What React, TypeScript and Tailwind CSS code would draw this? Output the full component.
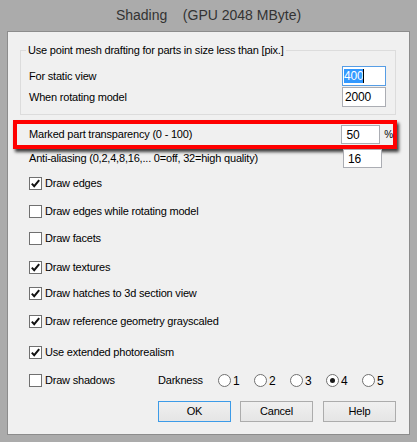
import React from 'react';

const font = { fontFamily: '"Liberation Sans", Arial, sans-serif' };

function CheckBox({ checked }: { checked: boolean }) {
  return (
    <div className="w-[13px] h-[13px] border border-[#707070] bg-white flex items-center justify-center shrink-0">
      {checked && (
        <svg width="11" height="11" viewBox="0 0 11 11">
          <path d="M1.8 5.6 L4.2 8.2 L9.2 2.2" fill="none" stroke="#111" strokeWidth="2" />
        </svg>
      )}
    </div>
  );
}

function CheckRow({ label, checked, mt }: { label: string; checked: boolean; mt: string }) {
  return (
    <div className={`flex items-center h-[13px] pl-[21px] ${mt}`}>
      <CheckBox checked={checked} />
      <span className="ml-[3px] leading-[13px]">{label}</span>
    </div>
  );
}

function Radio({ n, on }: { n: number; on?: boolean }) {
  return (
    <div className="flex items-center w-[36px]">
      <div className="w-[13px] h-[13px] rounded-full border border-[#707070] bg-white flex items-center justify-center">
        {on && <div className="w-[5px] h-[5px] rounded-full bg-[#1a1a1a]" />}
      </div>
      <span className="ml-[2px] text-[12px]">{n}</span>
    </div>
  );
}

function Btn({ label, primary, cls }: { label: string; primary?: boolean; cls?: string }) {
  return (
    <div
      className={`w-[73px] h-[21px] flex items-center justify-center border bg-gradient-to-b from-[#f0f0f0] to-[#e5e5e5] ${
        primary ? 'border-[#3c9be8]' : 'border-[#acacac]'
      } ${cls || ''}`}
    >
      {label}
    </div>
  );
}

export default function App() {
  const checks = [
    { label: 'Draw edges', checked: true, mt: 'mt-[9px]' },
    { label: 'Draw edges while rotating model', checked: false, mt: 'mt-[15px]' },
    { label: 'Draw facets', checked: false, mt: 'mt-[14px]' },
    { label: 'Draw textures', checked: true, mt: 'mt-[16px]' },
    { label: 'Draw hatches to 3d section view', checked: true, mt: 'mt-[13px]' },
    { label: 'Draw reference geometry grayscaled', checked: true, mt: 'mt-[15px]' },
    { label: 'Use extended photorealism', checked: true, mt: 'mt-[18px]' },
  ];

  return (
    <div className="w-[417px] h-[442px] bg-[#ababab] flex flex-col text-[11px] tracking-[-0.2px] text-black" style={font}>
      <div className="h-[31px] flex items-center justify-center text-[14px] tracking-normal text-[#333] whitespace-pre">
        {'Shading    (GPU 2048 MByte)'}
      </div>

      <div className="ml-[7px] w-[403px] h-[404px] border border-[#8c8c8c] bg-[#f0f0f0] flex flex-col">
        {/* point mesh group */}
        <div className="mt-[18px] ml-[12px] w-[376px] h-[65px] border border-[#dcdcdc] flex flex-col">
          <div className="-mt-[9px] ml-[5px] px-[2px] w-fit h-[16px] leading-[16px] bg-[#f0f0f0]">
            Use point mesh drafting for parts in size less than [pix.]
          </div>
          <div className="mt-[8px] h-[20px] flex items-center justify-between pl-[8px] pr-[9px]">
            <span>For static view</span>
            <div className="w-[44px] h-[20px] border border-[#569de5] bg-white flex items-center pl-[1px] text-[12px]">
              <span className="bg-[#3399ff] text-white leading-[14px]">400</span>
              <span className="w-px h-[14px] bg-black" />
            </div>
          </div>
          <div className="mt-[1px] h-[20px] flex items-center justify-between pl-[8px] pr-[9px]">
            <span>When rotating model</span>
            <div className="w-[44px] h-[20px] border border-[#abadb3] bg-white flex items-center pl-[2px] text-[12px]">2000</div>
          </div>
        </div>

        {/* highlighted row */}
        <div className="mt-[5px] ml-[5px] w-[384px] h-[29px] border-[4px] border-[#ff0000] shadow-[2px_3px_3px_rgba(0,0,0,0.75)] flex items-center">
          <span className="w-[326px] pl-[12px]">Marked part transparency (0 - 100)</span>
          <div className="w-[39px] h-[19px] border border-[#abadb3] bg-white flex items-center pl-[4px] text-[12px]">50</div>
          <span className="ml-[4px] text-[10px]">%</span>
        </div>

        <div className="h-[19px] flex items-center">
          <span className="w-[335px] pl-[21px]">Anti-aliasing (0,2,4,8,16,... 0=off, 32=high quality)</span>
          <div className="w-[39px] h-[19px] border border-[#abadb3] bg-white flex items-center pl-[4px] text-[12px]">16</div>
        </div>

        {checks.map((c) => (
          <CheckRow key={c.label} label={c.label} checked={c.checked} mt={c.mt} />
        ))}

        <div className="mt-[15px] h-[13px] flex items-center pl-[21px]">
          <div className="w-[129px] flex items-center">
            <CheckBox checked={false} />
            <span className="ml-[3px]">Draw shadows</span>
          </div>
          <span className="w-[60px]">Darkness</span>
          <Radio n={1} />
          <Radio n={2} />
          <Radio n={3} />
          <Radio n={4} on />
          <Radio n={5} />
        </div>

        <div className="mt-[14px] flex pl-[150px]">
          <Btn label="OK" primary />
          <Btn label="Cancel" cls="ml-[9px]" />
          <Btn label="Help" cls="ml-[10px]" />
        </div>
      </div>
    </div>
  );
}
